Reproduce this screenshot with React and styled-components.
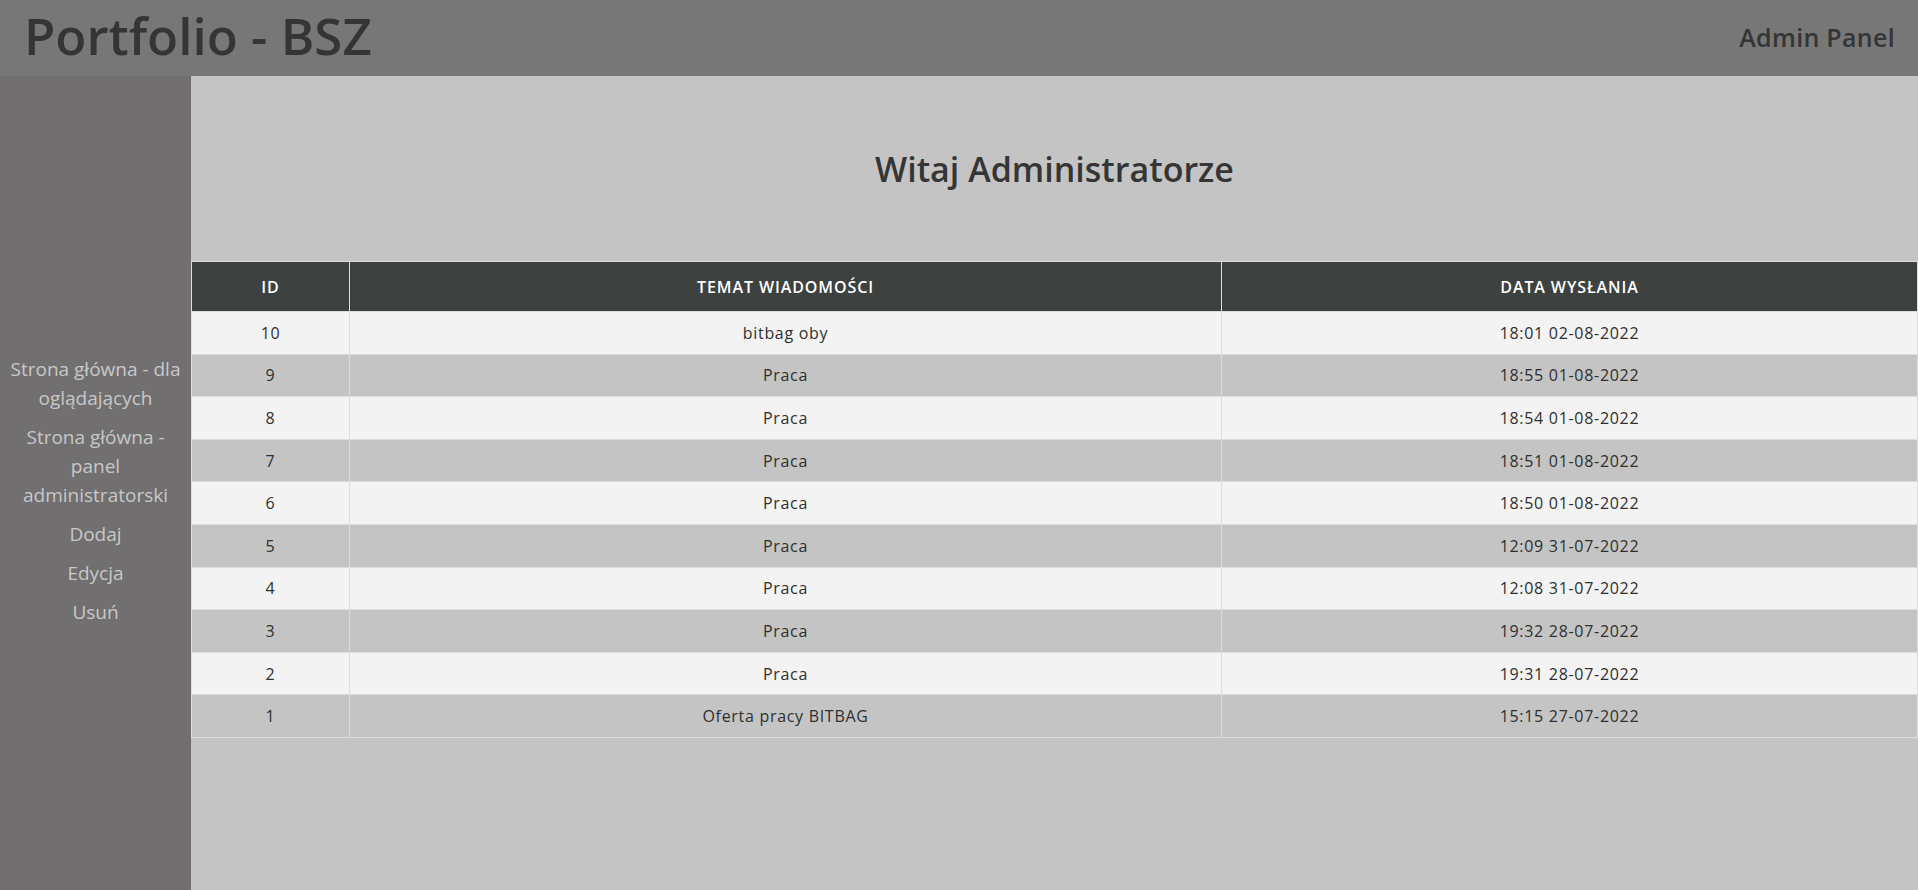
import styled, { createGlobalStyle } from "styled-components";

const Global = createGlobalStyle`
  body {
    margin: 0;
    font-family: "Open Sans", "Noto Sans", sans-serif;
    background: #c4c4c4;
  }
`;

const messages = [
  { id: 10, subject: "bitbag oby", date: "18:01 02-08-2022" },
  { id: 9, subject: "Praca", date: "18:55 01-08-2022" },
  { id: 8, subject: "Praca", date: "18:54 01-08-2022" },
  { id: 7, subject: "Praca", date: "18:51 01-08-2022" },
  { id: 6, subject: "Praca", date: "18:50 01-08-2022" },
  { id: 5, subject: "Praca", date: "12:09 31-07-2022" },
  { id: 4, subject: "Praca", date: "12:08 31-07-2022" },
  { id: 3, subject: "Praca", date: "19:32 28-07-2022" },
  { id: 2, subject: "Praca", date: "19:31 28-07-2022" },
  { id: 1, subject: "Oferta pracy BITBAG", date: "15:15 27-07-2022" },
];

const links = [
  "Strona główna - dla oglądających",
  "Strona główna - panel administratorski",
  "Dodaj",
  "Edycja",
  "Usuń",
];

export default function App() {
  return (
    <>
      <Global />
      <Header>
        <Logo>Portfolio - BSZ</Logo>
        <PanelName>Admin Panel</PanelName>
      </Header>
      <Body>
        <Sidebar>
          {links.map((l) => (
            <NavLink key={l}>{l}</NavLink>
          ))}
        </Sidebar>
        <Main>
          <Welcome>
            <h1>Witaj Administratorze</h1>
          </Welcome>
          <Table>
            <thead>
              <tr>
                <th className="id">ID</th>
                <th className="subject">TEMAT WIADOMOŚCI</th>
                <th>DATA WYSŁANIA</th>
              </tr>
            </thead>
            <tbody>
              {messages.map((m) => (
                <tr key={m.id}>
                  <td>{m.id}</td>
                  <td>{m.subject}</td>
                  <td>{m.date}</td>
                </tr>
              ))}
            </tbody>
          </Table>
        </Main>
      </Body>
    </>
  );
}

const Header = styled.header`
  height: 76px;
  background: #777777;
  display: flex;
  align-items: center;
  justify-content: space-between;
  padding: 0 23px 0 24px;
  color: #353535;
`;

const Logo = styled.div`
  font-size: 51px;
  font-weight: 600;
  margin-top: -6px;
`;

const PanelName = styled.div`
  font-size: 25px;
  font-weight: 600;
  letter-spacing: 0.3px;
  margin-top: -2px;
`;

const Body = styled.div`
  display: flex;
  min-height: calc(100vh - 76px);
`;

const Sidebar = styled.nav`
  width: 191px;
  flex-shrink: 0;
  background: #716f70;
  display: flex;
  flex-direction: column;
  justify-content: center;
  gap: 10px;
  padding: 15px 4px 0;
  box-sizing: border-box;
`;

const NavLink = styled.a`
  color: #c8c8c8;
  font-size: 19px;
  line-height: 29px;
  text-align: center;
  cursor: pointer;
`;

const Main = styled.main`
  flex: 1;
  background: #c4c4c4;
`;

const Welcome = styled.div`
  height: 185px;
  display: flex;
  align-items: center;
  justify-content: center;

  h1 {
    margin: 0;
    font-size: 34px;
    font-weight: 600;
    color: #353535;
  }
`;

const Table = styled.table`
  width: 100%;
  border-collapse: collapse;
  font-size: 16px;
  letter-spacing: 0.7px;
  color: #2f2f2f;

  th,
  td {
    border: 1px solid #dddddd;
    text-align: center;
    padding: 0;
  }

  th {
    background: #3d4140;
    color: #ffffff;
    font-weight: 600;
    letter-spacing: 0.9px;
    height: 49px;
  }

  th.id {
    width: 157px;
  }

  th.subject {
    width: 871px;
  }

  td {
    height: 41.6px;
  }

  tbody tr:nth-child(odd) {
    background: #f3f3f3;
  }

  tbody tr:nth-child(even) {
    background: #c4c4c4;
  }
`;
